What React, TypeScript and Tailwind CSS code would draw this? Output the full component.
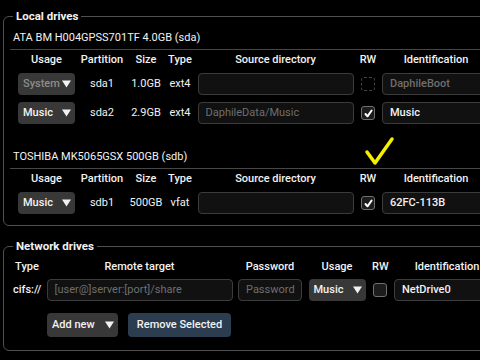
import React from 'react';

const Caret = () => (
  <svg width="9" height="8" viewBox="0 0 9 8" className="shrink-0">
    <path d="M0 0.5 H9 L4.5 7.5 Z" fill="#f2f2f2" />
  </svg>
);

const Select = ({ label, width = 'w-[57px]', disabled = false, tall = false }: { label: string; width?: string; disabled?: boolean; tall?: boolean }) => (
  <div
    className={`${width} ${tall ? 'h-[24px]' : 'h-[22px]'} shrink-0 rounded-[4px] bg-[#383838] flex items-center justify-between gap-[2px] pl-[5px] pr-[4px] font-medium ${disabled ? 'text-[#8c8c8c]' : 'text-[#f2f2f2]'}`}
  >
    <span>{label}</span>
    <Caret />
  </div>
);

const TextBox = ({ value, placeholder, width, bold = false }: { value?: string; placeholder?: string; width: string; bold?: boolean }) => (
  <div
    className={`${width} h-[22px] shrink-0 rounded-[4px] border border-[#3c3c3c] bg-[#111111] pl-[7px] flex items-center overflow-hidden whitespace-nowrap ${value ? 'text-[#f2f2f2]' : 'text-[#6f6f6f]'} ${bold ? 'font-medium' : ''}`}
  >
    {value ?? placeholder}
  </div>
);

const Check = ({ checked = false, disabled = false }: { checked?: boolean; disabled?: boolean }) => (
  <div
    className={`w-[14px] h-[14px] shrink-0 rounded-[3px] flex items-center justify-center ${disabled ? 'border border-dashed border-[#444444]' : 'border border-[#707070] bg-[#1c1c1c]'}`}
  >
    {checked && (
      <svg width="9" height="9" viewBox="0 0 9 9">
        <path d="M1.5 5 L3.5 7.3 L7.6 1.5" stroke="#ffffff" strokeWidth="2" fill="none" strokeLinecap="round" strokeLinejoin="round" />
      </svg>
    )}
  </div>
);

type Part = {
  usage: string;
  usageDisabled?: boolean;
  name: string;
  size: string;
  type: string;
  source?: string;
  sourcePlaceholder?: string;
  rw: boolean;
  rwDisabled?: boolean;
  ident?: string;
  identPlaceholder?: string;
};

const Drive = ({ title, parts, first }: { title: string; parts: Part[]; first?: boolean }) => (
  <div className={first ? '' : 'mt-[25px]'}>
    <div className="ml-[-3px] pl-[3px] pb-[3px] border-b border-[#474747] leading-[16px] text-[#f2f2f2]">{title}</div>
    <div className="flex mt-[2px] h-[16px] leading-[16px] font-medium text-center text-[#f2f2f2]">
      <div className="w-[67px] shrink-0">Usage</div>
      <div className="w-[44px] shrink-0">Partition</div>
      <div className="w-[44px] shrink-0">Size</div>
      <div className="w-[24px] shrink-0">Type</div>
      <div className="w-[167px] shrink-0">Source directory</div>
      <div className="w-[18px] shrink-0">RW</div>
      <div className="w-[118px] shrink-0">Identification</div>
    </div>
    <div className="flex flex-col gap-[7px] mt-[5px]">
      {parts.map((p) => (
        <div key={p.name} className="flex items-center h-[22px] text-center text-[#f2f2f2]">
          <div className="w-[67px] shrink-0 flex justify-center">
            <Select label={p.usage} disabled={p.usageDisabled} />
          </div>
          <div className="w-[44px] shrink-0">{p.name}</div>
          <div className="w-[44px] shrink-0">{p.size}</div>
          <div className="w-[24px] shrink-0">{p.type}</div>
          <div className="w-[167px] shrink-0 flex justify-center">
            <TextBox width="w-[156px]" value={p.source} placeholder={p.sourcePlaceholder} />
          </div>
          <div className="w-[18px] shrink-0 flex justify-center">
            <Check checked={p.rw} disabled={p.rwDisabled} />
          </div>
          <div className="w-[118px] shrink-0 pl-[5px] text-left">
            <TextBox width="w-[112px]" value={p.ident} placeholder={p.identPlaceholder} bold />
          </div>
        </div>
      ))}
    </div>
  </div>
);

export default function App() {
  return (
    <div className="relative w-[480px] h-[360px] overflow-hidden bg-black text-white text-[11px] font-[Roboto,sans-serif] pt-[8px] px-[3px]">
      <fieldset className="w-[520px] border border-[#505050] rounded-[6px] px-[9px] pt-[6px] pb-[11px]">
        <legend className="px-[3px] font-bold text-[11.5px] leading-[16px] text-[#f2f2f2]">Local drives</legend>
        <Drive
          first
          title="ATA BM H004GPSS701TF 4.0GB (sda)"
          parts={[
            { usage: 'System', usageDisabled: true, name: 'sda1', size: '1.0GB', type: 'ext4', rw: false, rwDisabled: true, identPlaceholder: 'DaphileBoot' },
            { usage: 'Music', name: 'sda2', size: '2.9GB', type: 'ext4', sourcePlaceholder: 'DaphileData/Music', rw: true, ident: 'Music' },
          ]}
        />
        <Drive
          title="TOSHIBA MK5065GSX 500GB (sdb)"
          parts={[{ usage: 'Music', name: 'sdb1', size: '500GB', type: 'vfat', rw: true, ident: '62FC-113B' }]}
        />
      </fieldset>

      <fieldset className="mt-[12px] w-[520px] border border-[#505050] rounded-[6px] px-[9px] pt-[5px] pb-[13px]">
        <legend className="px-[3px] font-bold text-[11.5px] leading-[16px] text-[#f2f2f2]">Network drives</legend>
        <div className="flex h-[16px] leading-[16px] font-medium text-center text-[#f2f2f2]">
          <div className="w-[28px] shrink-0">Type</div>
          <div className="w-[197px] shrink-0">Remote target</div>
          <div className="w-[64px] shrink-0">Password</div>
          <div className="w-[70px] shrink-0">Usage</div>
          <div className="w-[16px] shrink-0">RW</div>
          <div className="w-[118px] shrink-0">Identification</div>
        </div>
        <div className="flex items-center h-[22px] mt-[4px] text-[#f2f2f2]">
          <div className="w-[28px] shrink-0 text-center font-medium whitespace-nowrap">cifs://</div>
          <div className="w-[197px] shrink-0 flex justify-center">
            <TextBox width="w-[186px]" placeholder="[user@]server:[port]/share" />
          </div>
          <TextBox width="w-[64px]" placeholder="Password" />
          <div className="w-[70px] shrink-0 flex justify-center">
            <Select label="Music" />
          </div>
          <div className="w-[16px] shrink-0 flex justify-center">
            <Check />
          </div>
          <div className="w-[118px] shrink-0 pl-[6px]">
            <TextBox width="w-[112px]" value="NetDrive0" bold />
          </div>
        </div>
        <div className="flex items-center gap-[10px] mt-[12px] pl-[34px]">
          <Select label="Add new" width="w-[71px]" tall />
          <button className="w-[103px] h-[24px] rounded-[4px] bg-[#2c3d4f] text-[#f2f2f2] font-medium">Remove Selected</button>
        </div>
      </fieldset>

      <svg className="absolute left-[360px] top-[134px] pointer-events-none" width="40" height="36" viewBox="0 0 40 36">
        <path d="M7 18 L15 29 L32 5" stroke="#f5f000" strokeWidth="3.5" fill="none" strokeLinecap="round" strokeLinejoin="round" />
      </svg>
    </div>
  );
}
